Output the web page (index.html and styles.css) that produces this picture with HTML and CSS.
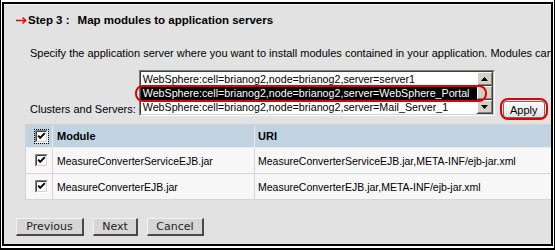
FILE: index.html
```html
<!DOCTYPE html>
<html>
<head>
<meta charset="utf-8">
<link rel="stylesheet" href="styles.css">
</head>
<body>
<div class="frame">
  <div class="panel">
    <div class="title">
      <svg class="arrow" width="11" height="9" viewBox="0 0 11 9"><path d="M0 4.5H9.5M6.5 1.5L9.8 4.5L6.5 7.5" fill="none" stroke="#e00000" stroke-width="1.3"/></svg>
      <span class="step">Step 3 :</span>
      <span class="title-text">Map modules to application servers</span>
    </div>
    <p class="desc">Specify the application server where you want to install modules contained in your application. Modules can be installed on the same application server or dispersed among several application servers.</p>
    <div class="form-row">
      <label class="label">Clusters and Servers:</label>
      <div class="listbox">
        <div class="listbox-inner">
          <div class="options">
            <div class="opt">WebSphere:cell=brianog2,node=brianog2,server=server1</div>
            <div class="opt sel">WebSphere:cell=brianog2,node=brianog2,server=WebSphere_Portal</div>
            <div class="opt">WebSphere:cell=brianog2,node=brianog2,server=Mail_Server_1</div>
          </div>
          <div class="scrollbar">
            <div class="sb-btn"><svg width="7" height="4" viewBox="0 0 7 4"><path d="M3.5 0L7 4H0Z" fill="#000"/></svg></div>
            <div class="sb-thumb"></div>
            <div class="sb-btn"><svg width="7" height="4" viewBox="0 0 7 4"><path d="M0 0H7L3.5 4Z" fill="#000"/></svg></div>
          </div>
        </div>
        <div class="callout sel-callout"></div>
      </div>
      <div class="apply-wrap">
        <button class="apply">Apply</button>
        <div class="callout apply-callout"></div>
      </div>
    </div>
    <table class="modules">
      <thead>
        <tr>
          <th class="c-check"><svg class="cb focus" width="13" height="13" viewBox="0 0 13 13"><rect x="0" y="0" width="13" height="13" fill="#fff"/><path d="M0.5 12.5V0.5H12.5" fill="none" stroke="#808080"/><path d="M1.5 11.5V1.5H11.5" fill="none" stroke="#404040"/><path d="M12.5 0.5V12.5H0.5" fill="none" stroke="#ffffff"/><path d="M11.5 1.5V11.5H1.5" fill="none" stroke="#d4d0c8"/><path d="M3.2 5.6L5.2 7.8L9.8 3.2" fill="none" stroke="#000" stroke-width="1.9"/></svg></th>
          <th class="c-module">Module</th>
          <th class="c-uri">URI</th>
        </tr>
      </thead>
      <tbody>
        <tr>
          <td class="c-check"><svg class="cb" width="13" height="13" viewBox="0 0 13 13"><rect x="0" y="0" width="13" height="13" fill="#fff"/><path d="M0.5 12.5V0.5H12.5" fill="none" stroke="#808080"/><path d="M1.5 11.5V1.5H11.5" fill="none" stroke="#404040"/><path d="M12.5 0.5V12.5H0.5" fill="none" stroke="#ffffff"/><path d="M11.5 1.5V11.5H1.5" fill="none" stroke="#d4d0c8"/><path d="M3.2 5.6L5.2 7.8L9.8 3.2" fill="none" stroke="#000" stroke-width="1.9"/></svg></td>
          <td class="c-module">MeasureConverterServiceEJB.jar</td>
          <td class="c-uri">MeasureConverterServiceEJB.jar,META-INF/ejb-jar.xml</td>
        </tr>
        <tr>
          <td class="c-check"><svg class="cb" width="13" height="13" viewBox="0 0 13 13"><rect x="0" y="0" width="13" height="13" fill="#fff"/><path d="M0.5 12.5V0.5H12.5" fill="none" stroke="#808080"/><path d="M1.5 11.5V1.5H11.5" fill="none" stroke="#404040"/><path d="M12.5 0.5V12.5H0.5" fill="none" stroke="#ffffff"/><path d="M11.5 1.5V11.5H1.5" fill="none" stroke="#d4d0c8"/><path d="M3.2 5.6L5.2 7.8L9.8 3.2" fill="none" stroke="#000" stroke-width="1.9"/></svg></td>
          <td class="c-module">MeasureConverterEJB.jar</td>
          <td class="c-uri">MeasureConverterEJB.jar,META-INF/ejb-jar.xml</td>
        </tr>
      </tbody>
    </table>
    <div class="actions">
      <button class="btn btn-prev">Previous</button>
      <button class="btn btn-next">Next</button>
      <button class="btn btn-cancel">Cancel</button>
    </div>
  </div>
</div>
</body>
</html>
```
FILE: styles.css
```css
body {
  margin: 0;
  background: #fff;
  font-family: "Liberation Sans", Arial, sans-serif;
  color: #000;
}

.frame {
  box-sizing: border-box;
  width: 555px;
  height: 250px;
  padding: 2px 1px 2px 1px;
  border: 1px solid #000;
  border-top: 0;
  border-bottom-width: 2px;
  background: #fff;
}

.panel {
  box-sizing: border-box;
  height: 244px;
  border: 2px solid #000;
  background: #e2e2e2;
  overflow: hidden;
  padding-top: 8px;
  box-shadow: inset 0 1px 0 #f4f4f4;
}

.title {
  display: flex;
  align-items: center;
  height: 16px;
  padding-left: 12px;
  font-weight: bold;
  font-size: 11.5px;
  line-height: 16px;
  white-space: nowrap;
}

.arrow {
  display: block;
  margin-right: 1px;
}

.step {
  margin-right: 8px;
}

.desc {
  margin: 19px 0 0 26px;
  font-size: 11px;
  line-height: 13px;
  white-space: nowrap;
}

.form-row {
  display: flex;
  align-items: flex-start;
  height: 54px;
  margin-top: 10px;
  padding-left: 26px;
}

.label {
  margin-top: 33px;
  margin-right: 3px;
  font-size: 11px;
  line-height: 13px;
  white-space: nowrap;
}

.listbox {
  position: relative;
  box-sizing: border-box;
  width: 356px;
  height: 46px;
  border: 1px solid;
  border-color: #7a7a7a #ffffff #ffffff #7a7a7a;
  flex-shrink: 0;
}

.listbox-inner {
  display: flex;
  height: 100%;
  box-sizing: border-box;
  border: 1px solid;
  border-color: #404040 #d4d0c8 #d4d0c8 #404040;
}

.options {
  flex: 1;
  background: #fff;
  overflow: hidden;
}

.opt {
  height: 14px;
  line-height: 14px;
  padding-left: 2px;
  font-size: 10.7px;
  white-space: nowrap;
  overflow: hidden;
}

.opt.sel {
  background: #000;
  color: #fff;
}

.scrollbar {
  width: 16px;
  display: flex;
  flex-direction: column;
  background: #ece9e4;
}

.sb-btn,
.sb-thumb {
  background: #d4d0c8;
  box-shadow: inset -1px -1px #404040, inset 1px 1px #ffffff, inset -2px -2px #808080, inset 2px 2px #d4d0c8;
}

.sb-btn {
  height: 14px;
  display: flex;
  align-items: center;
  justify-content: center;
}

.sb-btn svg {
  display: block;
}

.sb-thumb {
  flex: 1;
}

.callout {
  position: absolute;
  box-sizing: border-box;
  border: 2px solid #e00000;
  pointer-events: none;
}

.sel-callout {
  left: -5px;
  top: 14px;
  width: 352px;
  height: 17px;
  border-radius: 8px;
}

.apply-wrap {
  position: relative;
  margin-left: 8px;
  margin-top: 31px;
}

.apply {
  display: block;
  box-sizing: border-box;
  width: 42px;
  height: 17px;
  padding: 0;
  font-family: "Liberation Sans", Arial, sans-serif;
  font-size: 11px;
  color: #000;
  border: 1px solid #6e6e6e;
  border-radius: 3px;
  background: linear-gradient(#fbfbfb, #e4e4e4);
}

.apply-callout {
  left: -3px;
  top: -3px;
  width: 48px;
  height: 22px;
  border-radius: 8px;
}

.modules {
  margin-left: 21px;
  border-collapse: separate;
  border-spacing: 0;
  table-layout: fixed;
  width: 540px;
  border-top: 1px solid #d2d2d2;
  border-left: 1px solid #d2d2d2;
}

.modules th,
.modules td {
  padding: 0;
  text-align: left;
  vertical-align: middle;
  white-space: nowrap;
  overflow: hidden;
}

.modules th {
  height: 22px;
  background: #c1d3e1;
  font-size: 11px;
  font-weight: bold;
  border-right: 1px solid #e4ebf1;
  border-bottom: 1px solid #eaeaea;
}

.modules td {
  height: 25px;
  background: #f7f7f7;
  font-size: 10.5px;
  border-right: 1px solid #d6d6d6;
  border-bottom: 1px solid #d6d6d6;
}

.modules .c-check {
  width: 27px;
  padding-left: 9px;
  box-sizing: border-box;
}

.modules th.c-module,
.modules td.c-module {
  width: 197px;
  padding-left: 4px;
}

.modules .c-uri {
  padding-left: 3px;
}

.cb {
  display: block;
}

.cb.focus {
  outline: 1px dotted #000;
  outline-offset: 0;
}

.actions {
  display: flex;
  gap: 9px;
  margin: 18px 0 0 12px;
}

.btn {
  box-sizing: border-box;
  height: 18px;
  padding: 0;
  text-align: center;
  font-family: "DejaVu Sans", Verdana, sans-serif;
  font-size: 11px;
  color: #222;
  background: #d6d6d6;
  border-style: solid;
  border-width: 1px 2px 2px 1px;
  border-color: #f2f2f2 #4a4a4a #4a4a4a #f2f2f2;
}

.btn-prev {
  width: 68px;
}

.btn-next {
  width: 45px;
}

.btn-cancel {
  width: 57px;
}
```
